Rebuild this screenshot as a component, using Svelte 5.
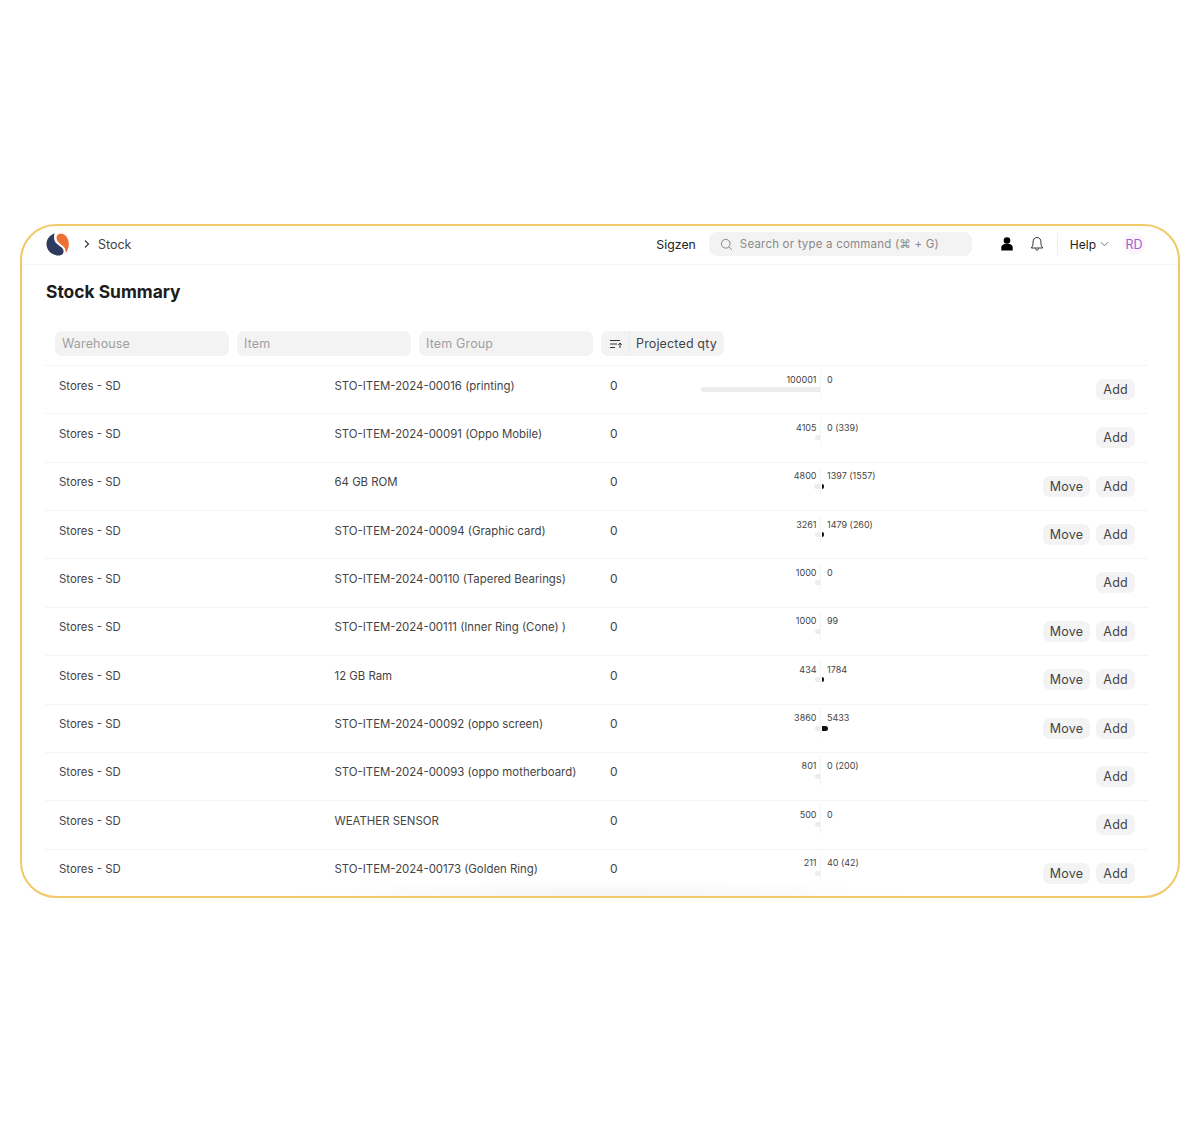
<script>
	const rows = [
		{ item: 'STO-ITEM-2024-00016 (printing)', out: 100001, avail: '0', qty: 0 },
		{ item: 'STO-ITEM-2024-00091 (Oppo Mobile)', out: 4105, avail: '0 (339)', qty: 0 },
		{ item: '64 GB ROM', out: 4800, avail: '1397 (1557)', qty: 1397, move: true },
		{ item: 'STO-ITEM-2024-00094 (Graphic card)', out: 3261, avail: '1479 (260)', qty: 1479, move: true },
		{ item: 'STO-ITEM-2024-00110 (Tapered Bearings)', out: 1000, avail: '0', qty: 0 },
		{ item: 'STO-ITEM-2024-00111 (Inner Ring (Cone) )', out: 1000, avail: '99', qty: 99, move: true },
		{ item: '12 GB Ram', out: 434, avail: '1784', qty: 1784, move: true },
		{ item: 'STO-ITEM-2024-00092 (oppo screen)', out: 3860, avail: '5433', qty: 5433, move: true },
		{ item: 'STO-ITEM-2024-00093 (oppo motherboard)', out: 801, avail: '0 (200)', qty: 0 },
		{ item: 'WEATHER SENSOR', out: 500, avail: '0', qty: 0 },
		{ item: 'STO-ITEM-2024-00173 (Golden Ring)', out: 211, avail: '40 (42)', qty: 40, move: true }
	];

	const scale = 119 / 100001;
	const outWidth = (n) => Math.max(5.5, n * scale);
	const qtyWidth = (n) => (n < 100 ? 0 : Math.max(2, n * scale));
</script>

<div class="frame">
	<header class="navbar">
		<svg class="logo" viewBox="0 0 24 24" width="24" height="24">
			<path d="M8.500 1.500C3.500 3 .5 7.500 .5 12c0 6.500 5.500 11.500 12 11.500 3.500 0 5.500-2 5-5-.5-3-4.500-4.500-7.500-7.500-2-2-2.500-6-1.500-9.500z" fill="#2f3a5f" />
			<path d="M15 .8c-4 0-5.500 3.200-5 6.200.5 3 3.500 5 6 7 2.500 2 3.500 5 2.500 8.500 3-2 5-6 5-10.500 0-6-4-11-8.500-11.200z" fill="#ee6f33" stroke="#fff" stroke-width="1.300" />
		</svg>
		<svg class="crumb-chevron" viewBox="0 0 8 10" width="8" height="10">
			<path d="M2 1.500 5.500 5 2 8.500" fill="none" stroke="#333" stroke-width="1.100" />
		</svg>
		<span class="crumb">Stock</span>

		<span class="company">Sigzen</span>
		<div class="search">
			<svg viewBox="0 0 14 14" width="13" height="13">
				<circle cx="6.200" cy="6.200" r="4.700" fill="none" stroke="#7c7c7c" stroke-width="1" />
				<path d="m9.700 9.700 3 3" stroke="#7c7c7c" stroke-width="1" />
			</svg>
			<span>Search or type a command (⌘ + G)</span>
		</div>
		<svg class="user" viewBox="0 0 12 14" width="12" height="14">
			<circle cx="6" cy="3.500" r="3.300" fill="#000" />
			<path d="M.3 13.500v-2.900c0-2.400 2.200-3.900 5.700-3.900s5.700 1.500 5.700 3.900v2.900z" fill="#000" />
		</svg>
		<svg class="bell" viewBox="0 0 14 16" width="14" height="16">
			<path d="M7 1.500c-2.600 0-3.900 2-3.900 4.300 0 3.200-.5 4.700-1.800 6.200h11.400c-1.300-1.500-1.800-3-1.800-6.200C10.900 3.500 9.600 1.500 7 1.500zM5.500 12.500c0 2.200 3 2.200 3 0" fill="none" stroke="#333" stroke-width="1" />
		</svg>
		<div class="divider"></div>
		<span class="help">Help</span>
		<svg class="help-chevron" viewBox="0 0 10 6" width="9" height="6">
			<path d="m1 1 4 4 4-4" fill="none" stroke="#666" stroke-width="1" />
		</svg>
		<div class="avatar">RD</div>
	</header>

	<h1>Stock Summary</h1>

	<div class="filters">
		<div class="field">Warehouse</div>
		<div class="field">Item</div>
		<div class="field">Item Group</div>
		<div class="sort">
			<span class="sort-icon">
				<svg viewBox="0 0 14 12" width="14" height="12">
					<path d="M1 2.500h10M1 6h7M1 9.500h5" stroke="#333" stroke-width="1" />
					<path d="M11 10V5M9.200 6.800 11 5l1.800 1.800" fill="none" stroke="#333" stroke-width="1" />
				</svg>
			</span>
			<span class="sort-label">Projected qty</span>
		</div>
	</div>

	<div class="list">
		{#each rows as row}
			<div class="row">
				<span class="warehouse">Stores - SD</span>
				<span class="item">{row.item}</span>
				<span class="count">0</span>
				<div class="chart">
					<div class="side left">
						<span class="num">{row.out}</span>
						<div class="bar out" style="width: {outWidth(row.out)}px"></div>
					</div>
					<div class="side right">
						<span class="num">{row.avail}</span>
						<div class="bar qty" style="width: {qtyWidth(row.qty)}px"></div>
					</div>
				</div>
				<div class="actions">
					{#if row.move}
						<button>Move</button>
					{/if}
					<button>Add</button>
				</div>
			</div>
		{/each}
	</div>
	<div class="fade"></div>
</div>

<style>
	:global(body) {
		background: #fff;
	}
	.frame {
		position: relative;
		box-sizing: border-box;
		margin: 224px 20px 0;
		height: 674px;
		border: 2px solid #f0c966;
		border-radius: 36px;
		overflow: hidden;
		background: #fff;
		font-family: Inter, 'Liberation Sans', sans-serif;
		color: #333;
	}
	.navbar {
		display: flex;
		align-items: center;
		box-sizing: border-box;
		height: 39px;
		padding: 0 33px 2px 24px;
		border-bottom: 1px solid #f4f4f4;
	}
	.logo {
		margin-right: 13px;
	}
	.crumb-chevron {
		margin-right: 7px;
	}
	.crumb {
		font-size: 12.500px;
		color: #444;
	}
	.company {
		margin-left: auto;
		font-size: 12.300px;
		color: #222;
	}
	.search {
		display: flex;
		align-items: center;
		gap: 7px;
		box-sizing: border-box;
		width: 263px;
		height: 24px;
		margin-left: 13px;
		padding-left: 11px;
		border-radius: 8px;
		background: #f3f3f3;
		font-size: 11.500px;
		letter-spacing: 0.2px;
		color: #8a8a8a;
	}
	.user {
		margin-left: 29px;
	}
	.bell {
		margin-left: 17px;
	}
	.divider {
		width: 1px;
		height: 22px;
		margin: 0 12px 0 13px;
		background: #efefef;
	}
	.help {
		font-size: 12px;
		color: #222;
	}
	.help-chevron {
		margin-left: 4px;
	}
	.avatar {
		display: flex;
		align-items: center;
		justify-content: center;
		width: 22px;
		height: 22px;
		margin-left: 14px;
		border-radius: 50%;
		background: #faf5fd;
		font-size: 12.500px;
		color: #a45ec9;
	}
	h1 {
		margin: 16px 0 0 24px;
		font-size: 17.400px;
		line-height: 22px;
		font-weight: 700;
		color: #1c1c1c;
	}
	.filters {
		display: flex;
		gap: 8px;
		margin: 28px 0 0 33px;
	}
	.field {
		box-sizing: border-box;
		width: 174px;
		height: 25px;
		padding-left: 7px;
		border-radius: 7px;
		background: #f3f3f3;
		font-size: 12.500px;
		line-height: 25px;
		letter-spacing: 0.15px;
		color: #a0a0a0;
	}
	.sort {
		display: flex;
		height: 25px;
		border-radius: 7px;
		background: #f3f3f3;
		font-size: 12.500px;
		line-height: 25px;
		letter-spacing: 0.15px;
		color: #444;
	}
	.sort-icon {
		display: flex;
		align-items: center;
		padding: 0 6px 0 8px;
		border-right: 1px solid #ebebeb;
	}
	.sort-label {
		padding: 0 7px 0 6px;
	}
	.list {
		margin: 9px 30px 0 23px;
	}
	.row {
		display: flex;
		box-sizing: border-box;
		height: 48.360px;
		padding: 0 13px 0 14px;
		border-top: 1px solid #f4f4f4;
		font-size: 11.400px;
		color: #444;
	}
	.warehouse,
	.item,
	.count {
		line-height: 14px;
		padding-top: 12.500px;
	}
	.warehouse {
		width: 275.500px;
	}
	.item {
		width: 275.500px;
	}
	.count {
		width: 91px;
		font-size: 12px;
	}
	.chart {
		display: flex;
		width: 240px;
		height: 28px;
		margin-top: 4px;
		font-size: 9px;
	}
	.side {
		display: flex;
		flex-direction: column;
		padding-top: 3.500px;
	}
	.left {
		box-sizing: border-box;
		width: 120px;
		align-items: flex-end;
		border-right: 1px solid #f4f4f4;
	}
	.left .num {
		padding-right: 3.500px;
	}
	.right {
		align-items: flex-start;
	}
	.right .num {
		padding-left: 6px;
	}
	.num {
		line-height: 12px;
		height: 12px;
		white-space: nowrap;
	}
	.bar {
		height: 5px;
		margin-top: 1.500px;
	}
	.out {
		background: #ececec;
		border-radius: 2.500px 0 0 2.500px;
	}
	.qty {
		background: #111;
		border-radius: 0 2.500px 2.500px 0;
		margin-left: 1px;
	}
	.actions {
		display: flex;
		gap: 6px;
		margin-left: auto;
		padding-top: 13px;
	}
	button {
		height: 21px;
		padding: 0 7px;
		border: none;
		border-radius: 7px;
		background: #f3f3f3;
		font-family: inherit;
		font-size: 12.500px;
		letter-spacing: 0.25px;
		color: #444;
	}
	.fade {
		position: absolute;
		left: 260px;
		right: 260px;
		bottom: 0;
		height: 16px;
		background: radial-gradient(ellipse at 50% 100%, #f4f4f4, rgba(255, 255, 255, 0) 70%);
	}
</style>
